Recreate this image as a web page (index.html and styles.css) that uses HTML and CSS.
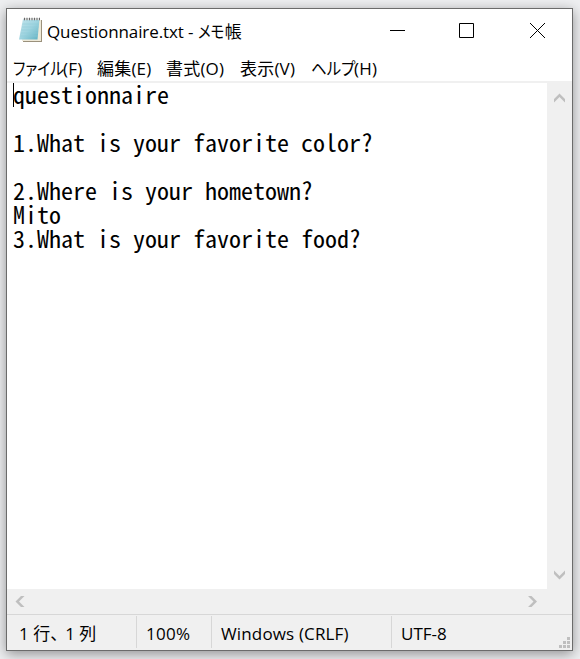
FILE: index.html
```html
<!DOCTYPE html>
<html lang="ja">
<head>
  <meta charset="UTF-8" />
  <meta name="viewport" content="width=device-width, initial-scale=1.0"/>
  <title>Questionnaire.txt - メモ帳</title>
  <link rel="stylesheet" href="styles.css">
</head>
<body>
  <div class="window">
    <!-- Title bar -->
    <div class="title-bar">
      <svg class="app-icon" width="26" height="26" viewBox="0 0 26 26">
        <defs>
          <linearGradient id="paper" x1="0" y1="0" x2="1" y2="1">
            <stop offset="0" stop-color="#c3e4ec"/>
            <stop offset="0.5" stop-color="#9fd4e0"/>
            <stop offset="1" stop-color="#5eb0c2"/>
          </linearGradient>
        </defs>
        <path d="M7 3H24V25H5Z" fill="#9b917c"/>
        <path d="M5 3H23V24H4Z" fill="#eee9d8"/>
        <path d="M5 2H21.500L19.500 22.500H1Z" fill="url(#paper)"/>
        <path d="M4.500 7H20.500M4 10H20.500M3.500 13H20M3 16H20M2.500 19H19.500" stroke="#8cc8d5" stroke-width="0.500"/>
        <path d="M5.500 2H21.500" stroke="#dfe1e0" stroke-width="2"/>
        <path d="M6 2H22" stroke="#666" stroke-width="2.500" stroke-dasharray="1 1.500"/>
      </svg>
      <div class="title"><span class="title-file">Questionnaire.txt - </span><span class="kana kana-memo">メモ</span>帳</div>
      <div class="controls">
        <svg width="70" height="46"><path d="M20 21.500H35" stroke="#000"/></svg>
        <svg width="70" height="46"><path d="M19.500 14.500H33.500V28.500H19.500Z" fill="none" stroke="#000"/></svg>
        <svg width="62" height="46"><path d="M20 14L35 29M35 14L20 29" stroke="#000"/></svg>
      </div>
    </div>

    <!-- Menu -->
    <div class="menu">
      <span class="item item-file"><span class="kana kana-file">ファイル</span>(F)</span>
      <span class="item item-edit">編集(E)</span>
      <span class="item item-format">書式(O)</span>
      <span class="item item-view">表示(V)</span>
      <span class="item item-help"><span class="kana kana-help">ヘルプ</span>(H)</span>
    </div>

    <!-- Text area and scroll bars -->
    <div class="editor">
      <pre class="text">questionnaire

1.What is your favorite color?

2.Where is your hometown?
Mito
3.What is your favorite food?</pre>
      <div class="scroll-v">
        <svg width="25" height="24"><path d="M7 16L12.500 10.500L18 16V19.500L12.500 14L7 19.500Z" class="arrow"/></svg>
        <svg width="25" height="24"><path d="M7 5.500L12.500 11L18 5.500V9L12.500 14.500L7 9Z" class="arrow"/></svg>
      </div>
    </div>
    <div class="scroll-h">
      <svg width="24" height="25"><path d="M14 7L8.500 12.500L14 18H17.500L12 12.500L17.500 7Z" class="arrow"/></svg>
      <svg width="24" height="25"><path d="M5 7L10.500 12.500L5 18H8.500L14 12.500L8.500 7Z" class="arrow"/></svg>
    </div>

    <!-- Status bar -->
    <div class="status">
      <div class="cell cell-pos">1 行<span class="comma">、</span>1 列</div>
      <div class="cell cell-zoom">100%</div>
      <div class="cell cell-eol">Windows (CRLF)</div>
      <div class="cell cell-enc">UTF-8</div>
      <svg class="grip" width="11" height="11"><path d="M8 0h3v3h-3zM4 4h3v3h-3zM8 4h3v3h-3zM0 8h3v3h-3zM4 8h3v3h-3zM8 8h3v3h-3z" fill="#bfbfbf"/></svg>
    </div>
  </div>
</body>
</html>
```
FILE: styles.css
```css
body {
  margin: 0;
  padding: 8px 7px 8px 6px;
  height: 659px;
  box-sizing: border-box;
  background: #eeeff1;
  font-family: "Open Sans", "Noto Sans CJK JP", sans-serif;
  font-size: 17px;
  color: #000;
  overflow: hidden;
}

.window {
  width: 567px;
  height: 643px;
  box-sizing: border-box;
  border: 1px solid #6b6b6b;
  background: #fff;
  box-shadow: 0 3px 12px rgba(0, 0, 0, 0.4);
  display: flex;
  flex-direction: column;
}

.title-bar {
  height: 46px;
  display: flex;
  align-items: flex-start;
}

.app-icon {
  margin: 8px 3px 0 11px;
}

.title {
  flex: 1;
  line-height: 45px;
  white-space: pre;
}

.title-file {
  letter-spacing: -0.100px;
}

.controls {
  display: flex;
  width: 202px;
}

.menu {
  height: 26px;
  display: flex;
  padding-left: 6px;
  line-height: 27px;
  border-bottom: 2px solid #f0f0f0;
  white-space: nowrap;
}

.item {
  letter-spacing: 0.200px;
}

.item-file {
  width: 84px;
}

.item-edit {
  width: 69px;
}

.item-format {
  width: 74px;
}

.item-view {
  width: 71px;
}

/* narrow katakana */
.kana {
  display: inline-block;
  font-feature-settings: "palt";
  transform-origin: left center;
}

.kana-file {
  width: 50px;
  transform: scaleX(0.860);
}

.kana-help {
  width: 43px;
  transform: scaleX(0.900);
}

.kana-memo {
  width: 27px;
  transform: scaleX(0.850);
}

.editor {
  flex: 1;
  display: flex;
  min-height: 0;
}

.text {
  flex: 1;
  margin: -1px 0 0 6px;
  font-family: "Noto Sans CJK JP", sans-serif;
  font-size: 24px;
  line-height: 24px;
  font-feature-settings: "hwid";
  position: relative;
}

/* caret */
.text::before {
  content: '';
  position: absolute;
  left: 0;
  top: 1px;
  width: 1px;
  height: 24px;
  background: #000;
}

.scroll-v {
  width: 25px;
  background: #f0f0f0;
  display: flex;
  flex-direction: column;
  justify-content: space-between;
}

.scroll-h {
  height: 25px;
  padding-right: 25px;
  background: #f0f0f0;
  display: flex;
  justify-content: space-between;
}

.arrow {
  fill: #bfbfbf;
}

.status {
  height: 35px;
  border-top: 1px solid #d7d7d7;
  background: #f0f0f0;
  display: flex;
  position: relative;
}

.cell {
  margin: 1px 0 2px;
  box-sizing: border-box;
  border-right: 1px solid #d7d7d7;
  line-height: 35px;
  white-space: nowrap;
}

.cell-pos {
  width: 130px;
  padding-left: 12px;
}

.comma {
  margin-right: -2px;
}

.cell-zoom {
  width: 75px;
  padding-left: 9px;
  letter-spacing: 0.300px;
}

.cell-eol {
  width: 180px;
  padding-left: 9px;
  letter-spacing: 0.150px;
}

.cell-enc {
  padding-left: 9px;
  border-right: none;
}

.grip {
  position: absolute;
  right: 2px;
  bottom: 2px;
}
```
